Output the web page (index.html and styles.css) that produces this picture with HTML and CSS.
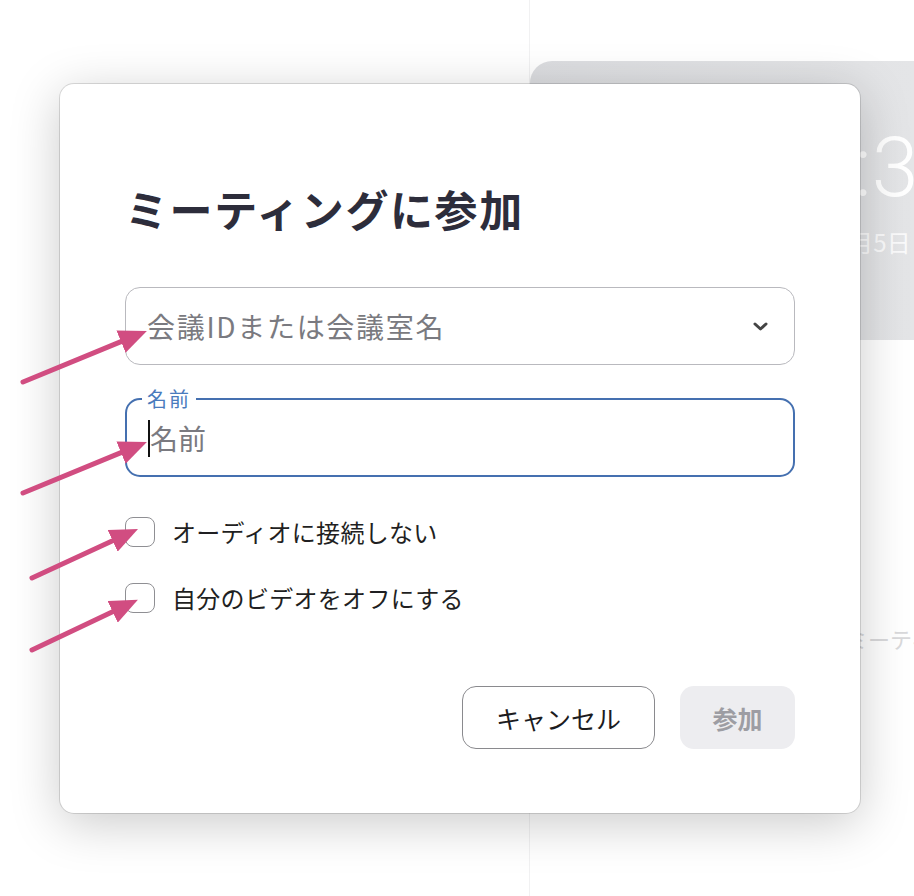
FILE: index.html
```html
<!DOCTYPE html>
<html lang="ja">
<head>
<meta charset="utf-8">
<title>ミーティングに参加</title>
<link rel="stylesheet" href="styles.css">
</head>
<body>
<div class="app">
  <div class="pane-left"></div>
  <div class="pane-right">
    <div class="clock-card">
      <div class="clock">10:30</div>
      <div class="date">2月5日</div>
    </div>
    <div class="schedule">
      <p class="empty">ミーティングはありません</p>
    </div>
  </div>
</div>

<div class="dialog">
  <h1 class="title">ミーティングに参加</h1>
  <div class="field select">
    <span class="placeholder wide">会議IDまたは会議室名</span>
    <svg class="chevron" width="15" height="9" viewBox="0 0 15 9"><path d="M2 2 L7.5 7 L13 2" fill="none" stroke="#444" stroke-width="3" stroke-linecap="round" stroke-linejoin="round"/></svg>
  </div>
  <fieldset class="field name">
    <legend>名前</legend>
    <div class="value"><span class="caret"></span><span class="placeholder">名前</span></div>
  </fieldset>
  <div class="options">
    <label class="check"><span class="box"></span><span>オーディオに接続しない</span></label>
    <label class="check"><span class="box"></span><span>自分のビデオをオフにする</span></label>
  </div>
  <div class="actions">
    <button class="btn btn-cancel">キャンセル</button>
    <button class="btn btn-join">参加</button>
  </div>
</div>

<svg class="annotations" width="914" height="896" viewBox="0 0 914 896">
  <defs>
    <marker id="head" viewBox="0 0 28 24" refX="0" refY="12" markerWidth="28" markerHeight="24" markerUnits="userSpaceOnUse" orient="auto">
      <path d="M0 0 L28 12 L0 24 Z" fill="#d14d81"/>
    </marker>
  </defs>
  <g stroke="#d14d81" stroke-width="5" stroke-linecap="round" marker-end="url(#head)">
    <line x1="23" y1="382" x2="121" y2="341.6"/>
    <line x1="23" y1="493" x2="121" y2="452.6"/>
    <line x1="32" y1="578" x2="112.6" y2="540.8"/>
    <line x1="32" y1="650" x2="112.6" y2="611.8"/>
  </g>
</svg>
</body>
</html>
```

FILE: styles.css
```css
html, body {
  margin: 0;
  padding: 0;
}

body {
  width: 914px;
  height: 896px;
  overflow: hidden;
  position: relative;
  background: #ffffff;
  font-family: "Noto Sans CJK JP", "Noto Sans", sans-serif;
}

/* background application */
.app {
  display: flex;
  height: 896px;
}

.pane-left {
  width: 529px;
  flex: none;
}

.pane-right {
  flex: 1;
  min-width: 0;
  overflow: hidden;
  border-left: 1px solid #f1f1f2;
  padding-top: 61px;
  white-space: nowrap;
}

.clock-card {
  height: 279px;
  box-sizing: border-box;
  padding-top: 65px;
  background: linear-gradient(90deg, #dcdde0, #e4e5e7);
  border-top-left-radius: 22px;
}

.clock {
  margin-left: 231px;
  font-family: Roboto, "Liberation Sans", sans-serif;
  font-weight: 300;
  font-size: 84px;
  line-height: 84px;
  color: #ffffff;
}

.date {
  margin-left: 306px;
  margin-top: 16px;
  font-size: 24px;
  line-height: 32px;
  color: rgba(255, 255, 255, 0.85);
}

.schedule {
  padding-top: 282px;
}

.empty {
  margin: 0 0 0 316px;
  font-size: 22px;
  line-height: 32px;
  color: #d9d9db;
}

/* dialog */
.dialog {
  position: absolute;
  left: 60px;
  top: 84px;
  width: 800px;
  height: 729px;
  box-sizing: border-box;
  padding: 99px 65px 0;
  background: #ffffff;
  border-radius: 14px;
  box-shadow: 0 0 0 1px rgba(0, 0, 0, 0.13), 0 10px 50px rgba(0, 0, 0, 0.21);
  display: flex;
  flex-direction: column;
}

.title {
  margin: 0;
  font-size: 43px;
  font-weight: 700;
  line-height: 50px;
  letter-spacing: 1.6px;
  color: #2d2d3b;
}

.field {
  box-sizing: border-box;
  border-radius: 15px;
}

.placeholder {
  font-size: 28px;
  line-height: 36px;
  color: #7a7a80;
}

.placeholder.wide {
  letter-spacing: 1.7px;
}

.select {
  margin-top: 54px;
  height: 78px;
  border: 1.5px solid #b9b9be;
  padding: 0 26px 0 21px;
  display: flex;
  align-items: center;
  justify-content: space-between;
}

.chevron {
  display: block;
}

.name {
  margin: 23px 0 0;
  padding: 10px 20px 19px 21px;
  border: 2px solid #4570b0;
  min-width: 0;
}

.name legend {
  margin-left: -6px;
  padding: 0 5px;
  font-size: 20px;
  line-height: 22px;
  letter-spacing: 2px;
  color: #4a7bbd;
}

.value {
  display: flex;
  align-items: center;
  height: 36px;
}

.caret {
  width: 2px;
  height: 37px;
  background: #111111;
  flex: none;
}

.options {
  margin-top: 40px;
  display: flex;
  flex-direction: column;
  gap: 36px;
}

.check {
  display: flex;
  align-items: center;
  gap: 17px;
  font-size: 24px;
  line-height: 30px;
  letter-spacing: 0.3px;
  color: #1f1f22;
}

.box {
  width: 30px;
  height: 30px;
  box-sizing: border-box;
  border: 1.5px solid #8f8f93;
  border-radius: 8px;
  background: #ffffff;
  flex: none;
}

.actions {
  margin-top: 73px;
  display: flex;
  justify-content: flex-end;
  gap: 25px;
}

.btn {
  height: 63px;
  box-sizing: border-box;
  border-radius: 14px;
  font-family: "Noto Sans CJK JP", "Noto Sans", sans-serif;
  font-size: 25px;
  padding: 0;
}

.btn-cancel {
  width: 193px;
  border: 1.5px solid #8a8a8e;
  background: #ffffff;
  color: #1c1c1e;
}

.btn-join {
  width: 115px;
  border: none;
  background: #ededf0;
  color: #9d9da3;
  font-weight: 700;
}

/* annotation arrows over the screenshot */
.annotations {
  position: absolute;
  left: 0;
  top: 0;
  pointer-events: none;
}
```
